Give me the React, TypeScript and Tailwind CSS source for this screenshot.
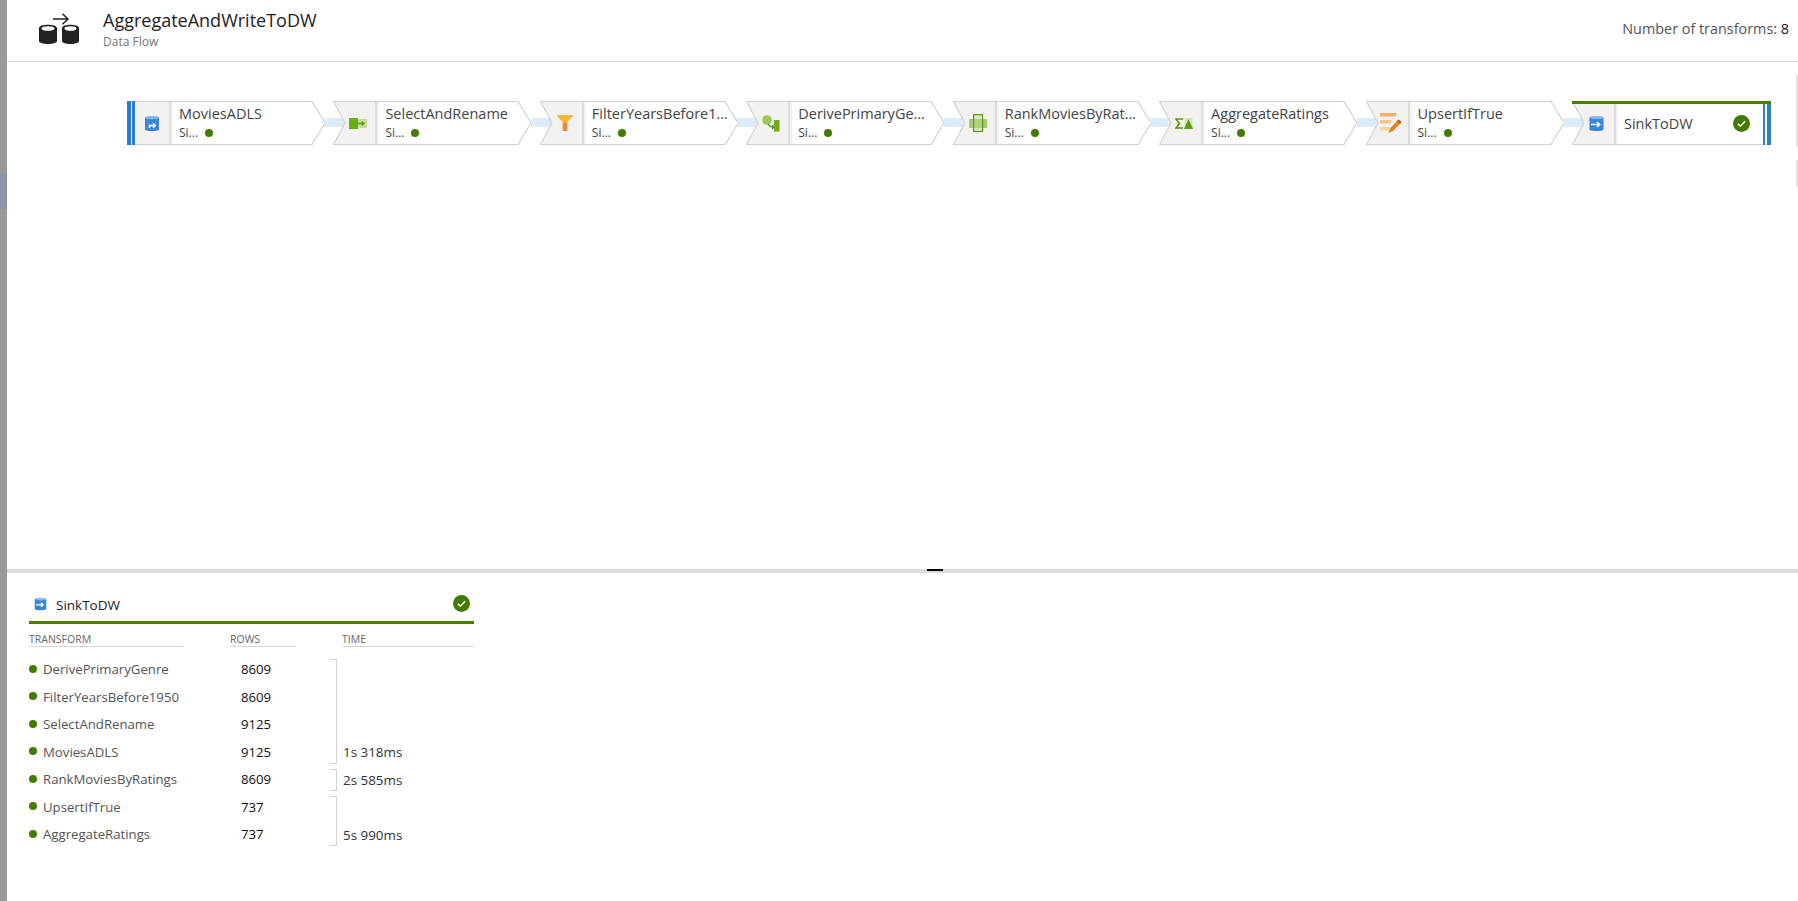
import React from 'react';

const FONT = "font-['Open_Sans',sans-serif]";

const SourceIcon = ({ className = 'w-[16px] h-[17px]' }: { className?: string }) => (
  <svg viewBox="0 0 16 17" className={className}>
    <path d="M1 2.5C1 1 15 1 15 2.5V14.5C15 16.5 1 16.5 1 14.5Z" fill="#3a86dc" />
    <ellipse cx="8" cy="2.5" rx="7" ry="1.6" fill="#8ab9ec" />
    <path d="M5.5 13V10.5H11M9 8.3L11.3 10.5L9 12.7" fill="none" stroke="#fff" strokeWidth="1.5" />
  </svg>
);

const SinkIcon = ({ className = 'w-[15px] h-[17px]' }: { className?: string }) => (
  <svg viewBox="0 0 15 17" className={className}>
    <path d="M0.5 2.5C0.5 1 14.5 1 14.5 2.5V14.5C14.5 16.5 0.5 16.5 0.5 14.5Z" fill="#3a86dc" />
    <ellipse cx="7.5" cy="2.5" rx="7" ry="1.6" fill="#8ab9ec" />
    <path d="M2 9.5H10.5M8 7L10.7 9.5L8 12" fill="none" stroke="#fff" strokeWidth="1.5" />
  </svg>
);

const SelectIcon = () => (
  <svg viewBox="0 0 18 11" className="w-[18px] h-[11px]">
    <rect x="9" y="1" width="9" height="9" fill="#c3dc9b" />
    <rect x="0" y="0" width="9" height="11" fill="#6cab12" />
    <path d="M8 5.5H15M12.8 3.5L15 5.5L12.8 7.5" fill="none" stroke="#5c9a10" strokeWidth="1.3" />
  </svg>
);

const FilterIcon = () => (
  <svg viewBox="0 0 16 16" className="w-[16px] h-[16px]">
    <path d="M0 0H16C16 3 10.5 5 10.3 8H5.7C5.5 5 0 3 0 0Z" fill="#f8b73c" />
    <rect x="5.7" y="8" width="4.6" height="8" fill="#ee8330" />
  </svg>
);

const DeriveIcon = () => (
  <svg viewBox="0 0 18 17" className="w-[18px] h-[17px]">
    <circle cx="5" cy="5" r="4.8" fill="#9ccb5c" />
    <rect x="12" y="5" width="5.5" height="11.5" fill="#74ac1c" />
    <path d="M6 9L9 12H12M10 10L12 12L10 14" fill="none" stroke="#4f8a10" strokeWidth="1.1" />
  </svg>
);

const RankIcon = () => (
  <svg viewBox="0 0 18 18" className="w-[18px] h-[18px]">
    <rect x="0" y="5" width="18" height="9" fill="#a6c971" />
    <rect x="4.6" y="0.6" width="9" height="17" fill="#b9d58e" fillOpacity="0.5" stroke="#5c9a10" strokeWidth="1.2" />
  </svg>
);

const AggregateIcon = () => (
  <svg viewBox="0 0 18 11" className="w-[18px] h-[11px]">
    <path d="M8 1H1L4.5 5.5L1 10H8" fill="none" stroke="#5c9a10" strokeWidth="1.7" />
    <rect x="9.5" y="0" width="8" height="11" fill="#d5e6ba" />
    <path d="M13.5 1L18 11H9Z" fill="#5c9a10" />
  </svg>
);

const UpsertIcon = () => (
  <svg viewBox="0 0 22 20" className="w-[22px] h-[20px]">
    <rect x="0" y="0" width="16" height="3.5" fill="#f6b26b" />
    <rect x="0" y="7" width="11" height="3.5" fill="#f8c186" />
    <rect x="0" y="14" width="9" height="3.5" fill="#fad3ab" />
    <path d="M18.5 6.5L21.5 9L13 18L8.5 20L10 15.5Z" fill="#e8811a" />
    <path d="M18.5 6.5L21.5 9L20 10.8L17 8.2Z" fill="#c55f0a" />
  </svg>
);

const CheckCircle = () => (
  <svg viewBox="0 0 17 17" className="w-[17px] h-[17px]">
    <circle cx="8.5" cy="8.5" r="8.5" fill="#437a00" />
    <path d="M4.8 8.8L7.3 11.2L12.2 6.2" fill="none" stroke="#fff" strokeWidth="1.5" />
  </svg>
);

type FlowNode = { name: string; icon: React.ReactNode; nameWidth: string };

const nodes: FlowNode[] = [
  { name: 'MoviesADLS', icon: <SourceIcon />, nameWidth: 'w-[133px]' },
  { name: 'SelectAndRename', icon: <SelectIcon />, nameWidth: 'w-[133px]' },
  { name: 'FilterYearsBefore1950', icon: <FilterIcon />, nameWidth: 'w-[138px]' },
  { name: 'DerivePrimaryGenre', icon: <DeriveIcon />, nameWidth: 'w-[133px]' },
  { name: 'RankMoviesByRatings', icon: <RankIcon />, nameWidth: 'w-[133px]' },
  { name: 'AggregateRatings', icon: <AggregateIcon />, nameWidth: 'w-[133px]' },
  { name: 'UpsertIfTrue', icon: <UpsertIcon />, nameWidth: 'w-[133px]' },
  { name: 'SinkToDW', icon: <SinkIcon />, nameWidth: 'w-[133px]' },
];

const NodeShape = ({ first, last }: { first: boolean; last: boolean }) => {
  const leftBox = first
    ? 'M0.5 0.5H42V43.5H0.5Z'
    : 'M0.5 0.5H42V43.5H0.5L12 22Z';
  const outline = first
    ? 'M0.5 0.5H185L198 22L185 43.5H0.5Z'
    : last
      ? 'M0.5 0.5H198.5V43.5H0.5L12 22Z'
      : 'M0.5 0.5H185L198 22L185 43.5H0.5L12 22Z';
  return (
    <svg viewBox="0 0 199 44" className="absolute inset-0 w-[199px] h-[44px]">
      <path d={outline} fill="#fff" />
      <path d={leftBox} fill="#f3f2f1" />
      <rect x="42" y="0.5" width="2" height="43" fill="#dcdcdc" />
      <rect x="44" y="0.5" width="2" height="43" fill="#f3f3f3" />
      <path d={outline} fill="none" stroke="#d2d2d2" strokeWidth="1.2" />
    </svg>
  );
};

const Node = ({ node, index }: { node: FlowNode; index: number }) => {
  const first = index === 0;
  const last = index === nodes.length - 1;
  return (
    <div className="relative w-[198px] h-[44px] shrink-0">
      {!first && <div className="absolute left-[-9px] top-[17px] w-[21px] h-[9px] bg-[#deecf9]" />}
      <NodeShape first={first} last={last} />
      {first && (
        <div className="absolute left-0 top-0 w-[8px] h-[44px] flex justify-between">
          <div className="w-[4px] bg-[#2b7cd3]" />
          <div className="w-[3px] bg-[#2b7cd3]" />
        </div>
      )}
      {last && (
        <>
          <div className="absolute left-0 top-0 w-[199px] h-[3px] bg-[#4b7d00]" />
          <div className="absolute left-[191px] top-[3px] w-[8px] h-[41px] flex justify-between">
            <div className="w-[2px] bg-[#2b7cd3]" />
            <div className="w-[4px] bg-[#2b7cd3]" />
          </div>
          <div className="absolute left-[161px] top-[14px]">
            <CheckCircle />
          </div>
        </>
      )}
      <div className="absolute left-[8px] top-0 w-[34px] h-[44px] flex items-center justify-center">
        {node.icon}
      </div>
      {last ? (
        <div className="absolute left-[52px] top-[13px] text-[14.5px] leading-[20px] text-[#444]">{node.name}</div>
      ) : (
        <>
          <div className={`absolute left-[52px] top-[3px] ${node.nameWidth} truncate text-[14.5px] leading-[20px] text-[#444]`}>
            {node.name}
          </div>
          <div className="absolute left-[52px] top-[24px] text-[12px] leading-[16px] text-[#444]">Si...</div>
          <div className="absolute left-[78px] top-[28px] w-[8px] h-[8px] rounded-full bg-[#437a00]" />
        </>
      )}
    </div>
  );
};

type Row = { name: string; rows: number };
const groups: { time: string; rows: Row[] }[] = [
  {
    time: '1s 318ms',
    rows: [
      { name: 'DerivePrimaryGenre', rows: 8609 },
      { name: 'FilterYearsBefore1950', rows: 8609 },
      { name: 'SelectAndRename', rows: 9125 },
      { name: 'MoviesADLS', rows: 9125 },
    ],
  },
  { time: '2s 585ms', rows: [{ name: 'RankMoviesByRatings', rows: 8609 }] },
  {
    time: '5s 990ms',
    rows: [
      { name: 'UpsertIfTrue', rows: 737 },
      { name: 'AggregateRatings', rows: 737 },
    ],
  },
];

export default function App() {
  return (
    <div className={`flex h-screen w-full overflow-hidden bg-white ${FONT}`}>
      {/* page behind the blade */}
      <div className="relative w-[7px] shrink-0 bg-[#999]">
        <div className="absolute left-0 top-[173px] w-[7px] h-[36px] bg-[#8a94a3]" />
      </div>

      <div className="relative flex-1 flex flex-col min-w-0">
        <header className="h-[62px] shrink-0 flex border-b border-[#dcdcdc]">
          <svg viewBox="0 0 40 32" className="ml-[32px] mt-[13px] w-[40px] h-[32px]">
            <path d="M14 6H29M23.5 0.8L29 6L23.5 11.2" fill="none" stroke="#222" strokeWidth="1.5" />
            <path d="M0 15C0 10.5 18 10.5 18 15V28C18 32 0 32 0 28Z" fill="#222" />
            <ellipse cx="9" cy="15.5" rx="6.5" ry="2.3" fill="#fff" />
            <path d="M23 15C23 10.5 40 10.5 40 15V28C40 32 23 32 23 28Z" fill="#222" />
            <ellipse cx="31.5" cy="15.5" rx="6" ry="2.3" fill="#fff" />
          </svg>
          <div className="ml-[24px] pt-[7px]">
            <div className="text-[18px] leading-[26px] text-[#222]">AggregateAndWriteToDW</div>
            <div className="text-[12px] leading-[16px] mt-[1px] text-[#777]">Data Flow</div>
          </div>
          <div className="ml-auto mr-[9px] pt-[19px] text-[14.4px] leading-[20px] text-[#555]">
            Number of transforms: <span className="text-[#222]">8</span>
          </div>
        </header>

        <main className="h-[507px] shrink-0 pl-[120px] pt-[39px]">
          <div className="flex gap-[8.43px]">
            {nodes.map((n, i) => (
              <Node key={n.name} node={n} index={i} />
            ))}
          </div>
        </main>

        {/* splitter */}
        <div className="relative h-[4px] shrink-0 bg-[#dcdcdc]">
          <div className="absolute left-[920px] top-0 w-[16px] h-[2px] bg-black" />
        </div>

        <section className="flex-1 pl-[22px] pt-[18px]">
          <div className="w-[445px]">
            <div className="h-[30px] flex items-center border-b-[3px] border-[#4b7d00] box-content pb-0">
              <div className="ml-[5px] mt-[-5px]">
                <SinkIcon className="w-[13px] h-[14px]" />
              </div>
              <span className="ml-[9px] mt-[-3px] text-[13.5px] leading-[20px] text-[#222]">SinkToDW</span>
              <div className="ml-auto mr-[4px] mt-[-5px]">
                <CheckCircle />
              </div>
            </div>
            <div className="flex text-[10.5px] leading-[14px] text-[#666] h-[23px]">
              <div className="w-[154px] pt-[8px] border-b border-[#d8d8d8]">TRANSFORM</div>
              <div className="ml-[47px] w-[66px] pt-[8px] border-b border-[#d8d8d8]">ROWS</div>
              <div className="ml-[46px] w-[132px] pt-[8px] border-b border-[#d8d8d8]">TIME</div>
            </div>
            <div className="pt-[9px]">
              {groups.map((g) => (
                <div key={g.time} className="flex">
                  <div className="w-[301px]">
                    {g.rows.map((r) => (
                      <div key={r.name} className="h-[27.5px] flex items-center text-[13.2px]">
                        <div className="w-[8px] h-[8px] rounded-full bg-[#437a00] mt-[-2px]" />
                        <div className="ml-[6px] mt-[1px] w-[198px] text-[#555]">{r.name}</div>
                        <div className="mt-[1px] text-[#111]">{r.rows}</div>
                      </div>
                    ))}
                  </div>
                  <div className="w-[7px] my-[2.5px] border-t border-r border-b border-[#d4d4d4]" />
                  <div className="ml-[6px] mt-auto h-[27.5px] flex items-center text-[13.4px] text-[#333]">{g.time}</div>
                </div>
              ))}
            </div>
          </div>
        </section>

        {/* edge of the neighbouring flyout */}
        <div className="absolute right-0 top-[75px] w-[2px] h-[72px] bg-[#e4e4e4]" />
        <div className="absolute right-0 top-[160px] w-[2px] h-[27px] bg-[#e4e4e4]" />
      </div>
    </div>
  );
}
